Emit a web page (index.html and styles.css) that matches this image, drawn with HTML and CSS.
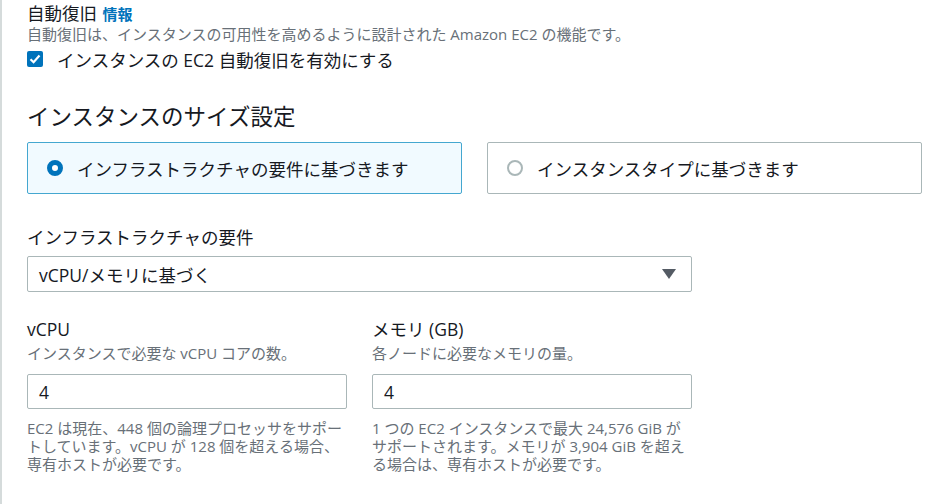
FILE: index.html
```html
<!DOCTYPE html>
<html lang="ja">
<head>
<meta charset="utf-8">
<link rel="stylesheet" href="styles.css">
</head>
<body>
<div class="page">
  <div class="field-title">自動復旧 <a class="info">情報</a></div>
  <div class="desc">自動復旧は、インスタンスの可用性を高めるように設計された Amazon EC2 の機能です。</div>
  <label class="check-row">
    <svg class="checkbox" width="16" height="16" viewBox="0 0 16 16"><rect x="0" y="0" width="16" height="16" rx="2" fill="#0073bb"/><path d="M3.5 8.2 L6.6 11.2 L12.5 4.6" fill="none" stroke="#fff" stroke-width="2.2"/></svg>
    <span>インスタンスの EC2 自動復旧を有効にする</span>
  </label>

  <h2 class="heading">インスタンスのサイズ設定</h2>
  <div class="tiles">
    <div class="tile selected">
      <span class="radio on"></span>
      <span>インフラストラクチャの要件に基づきます</span>
    </div>
    <div class="tile">
      <span class="radio"></span>
      <span>インスタンスタイプに基づきます</span>
    </div>
  </div>

  <div class="label">インフラストラクチャの要件</div>
  <div class="select">
    <span>vCPU/メモリに基づく</span>
    <svg class="caret" width="14" height="10" viewBox="0 0 14 10"><polygon points="0,0 14,0 7,10" fill="#545b64"/></svg>
  </div>

  <div class="cols">
    <div class="col">
      <div class="label">vCPU</div>
      <div class="desc">インスタンスで必要な vCPU コアの数。</div>
      <div class="input">4</div>
      <div class="help">EC2 は現在、448 個の論理プロセッサをサポー<br>トしています。vCPU が 128 個を超える場合、<br>専有ホストが必要です。</div>
    </div>
    <div class="col">
      <div class="label">メモリ (GB)</div>
      <div class="desc">各ノードに必要なメモリの量。</div>
      <div class="input">4</div>
      <div class="help">1 つの EC2 インスタンスで最大 24,576 GiB が<br>サポートされます。メモリが 3,904 GiB を超え<br>る場合は、専有ホストが必要です。</div>
    </div>
  </div>
</div>
</body>
</html>
```
FILE: styles.css
```css
* { box-sizing: border-box; }
html, body { margin: 0; padding: 0; background: #fff; }
body {
  font-family: "Open Sans", "Noto Sans CJK JP", sans-serif;
  color: #16191f;
  font-size: 17.5px;
}
.page {
  border-left: 2px solid #d5dbdb;
  padding: 2px 25px 0 25px;
  min-height: 504px;
}
.field-title {
  font-size: 17.5px;
  line-height: 22px;
}
.info {
  color: #0073bb;
  font-weight: 700;
  font-size: 15px;
  margin-left: 1px;
}
.desc {
  font-size: 15px;
  line-height: 19px;
  color: #687078;
}
.check-row {
  display: flex;
  align-items: center;
  gap: 14px;
  margin-top: 5px;
  height: 20px;
  font-size: 17.5px;
}
.checkbox { display: block; flex: none; }
.heading {
  font-size: 22.5px;
  font-weight: 400;
  line-height: 30px;
  margin: 33px 0 0 0;
}
.tiles {
  display: grid;
  grid-template-columns: 1fr 1fr;
  gap: 25px;
  margin-top: 10px;
}
.tile {
  height: 52px;
  border: 1px solid #aab7b8;
  border-radius: 2px;
  display: flex;
  align-items: center;
  gap: 14px;
  padding-left: 19px;
  font-size: 17.5px;
}
.tile.selected {
  background: #f1faff;
  border-color: #44a7d0;
}
.radio {
  width: 16px;
  height: 16px;
  border-radius: 50%;
  border: 2px solid #aab7b8;
  background: #fff;
  flex: none;
}
.radio.on {
  border: 5px solid #0073bb;
}
.label {
  font-size: 17.5px;
  line-height: 22px;
  margin-top: 32px;
}
.select {
  width: 665px;
  height: 36px;
  margin-top: 8px;
  border: 1px solid #aab7b8;
  border-radius: 2px;
  display: flex;
  align-items: center;
  justify-content: space-between;
  padding: 0 15px 0 11px;
  font-size: 17.5px;
}
.caret { display: block; }
.cols {
  display: grid;
  grid-template-columns: 1fr 1fr;
  gap: 25px;
  width: 665px;
}
.cols .label { margin-top: 26px; }
.cols .desc { margin-top: 3px; line-height: 20px; }
.input {
  margin-top: 11px;
  height: 35px;
  border: 1px solid #aab7b8;
  border-radius: 2px;
  display: flex;
  align-items: center;
  padding-left: 11px;
  font-size: 17.5px;
}
.help {
  margin-top: 10px;
  font-size: 15px;
  line-height: 18px;
  color: #687078;
  white-space: nowrap;
}
```
